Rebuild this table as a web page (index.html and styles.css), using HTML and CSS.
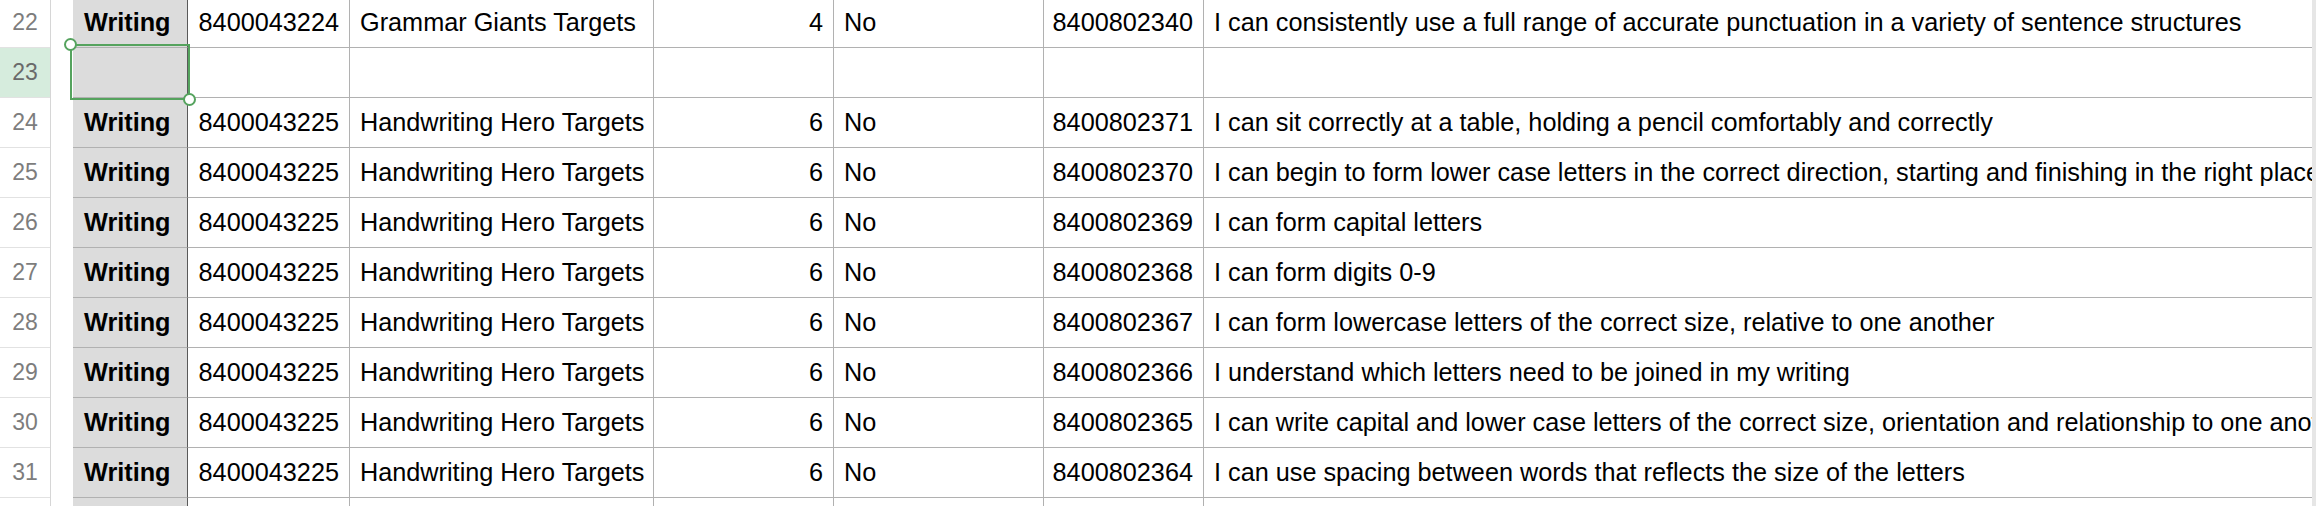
FILE: index.html
```html
<!DOCTYPE html>
<html lang="en">
<head>
<meta charset="utf-8">
<title>Sheet</title>
<link rel="stylesheet" href="styles.css">
</head>
<body>
<div class="sheet">
  <div class="rowheads">
    <div class="rh">22</div>
    <div class="rh rh-active">23</div>
    <div class="rh">24</div>
    <div class="rh">25</div>
    <div class="rh">26</div>
    <div class="rh">27</div>
    <div class="rh">28</div>
    <div class="rh">29</div>
    <div class="rh">30</div>
    <div class="rh">31</div>
    <div class="rh"></div>
  </div>
  <div class="gap"></div>
  <div class="table">
    <div class="row">
      <div class="c c-cat">Writing</div>
      <div class="c num">8400043224</div>
      <div class="c">Grammar Giants Targets</div>
      <div class="c num">4</div>
      <div class="c">No</div>
      <div class="c num">8400802340</div>
      <div class="c c-last">I can consistently use a full range of accurate punctuation in a variety of sentence structures</div>
    </div>
    <div class="row">
      <div class="c c-cat c-selected">
        <div class="sel"></div>
        <div class="handle handle-tl"></div>
        <div class="handle handle-br"></div>
      </div>
      <div class="c num"></div>
      <div class="c"></div>
      <div class="c num"></div>
      <div class="c"></div>
      <div class="c num"></div>
      <div class="c c-last"></div>
    </div>
    <div class="row">
      <div class="c c-cat">Writing</div>
      <div class="c num">8400043225</div>
      <div class="c">Handwriting Hero Targets</div>
      <div class="c num">6</div>
      <div class="c">No</div>
      <div class="c num">8400802371</div>
      <div class="c c-last">I can sit correctly at a table, holding a pencil comfortably and correctly</div>
    </div>
    <div class="row">
      <div class="c c-cat">Writing</div>
      <div class="c num">8400043225</div>
      <div class="c">Handwriting Hero Targets</div>
      <div class="c num">6</div>
      <div class="c">No</div>
      <div class="c num">8400802370</div>
      <div class="c c-last">I can begin to form lower case letters in the correct direction, starting and finishing in the right place</div>
    </div>
    <div class="row">
      <div class="c c-cat">Writing</div>
      <div class="c num">8400043225</div>
      <div class="c">Handwriting Hero Targets</div>
      <div class="c num">6</div>
      <div class="c">No</div>
      <div class="c num">8400802369</div>
      <div class="c c-last">I can form capital letters</div>
    </div>
    <div class="row">
      <div class="c c-cat">Writing</div>
      <div class="c num">8400043225</div>
      <div class="c">Handwriting Hero Targets</div>
      <div class="c num">6</div>
      <div class="c">No</div>
      <div class="c num">8400802368</div>
      <div class="c c-last">I can form digits 0-9</div>
    </div>
    <div class="row">
      <div class="c c-cat">Writing</div>
      <div class="c num">8400043225</div>
      <div class="c">Handwriting Hero Targets</div>
      <div class="c num">6</div>
      <div class="c">No</div>
      <div class="c num">8400802367</div>
      <div class="c c-last">I can form lowercase letters of the correct size, relative to one another</div>
    </div>
    <div class="row">
      <div class="c c-cat">Writing</div>
      <div class="c num">8400043225</div>
      <div class="c">Handwriting Hero Targets</div>
      <div class="c num">6</div>
      <div class="c">No</div>
      <div class="c num">8400802366</div>
      <div class="c c-last">I understand which letters need to be joined in my writing</div>
    </div>
    <div class="row">
      <div class="c c-cat">Writing</div>
      <div class="c num">8400043225</div>
      <div class="c">Handwriting Hero Targets</div>
      <div class="c num">6</div>
      <div class="c">No</div>
      <div class="c num">8400802365</div>
      <div class="c c-last">I can write capital and lower case letters of the correct size, orientation and relationship to one another</div>
    </div>
    <div class="row">
      <div class="c c-cat">Writing</div>
      <div class="c num">8400043225</div>
      <div class="c">Handwriting Hero Targets</div>
      <div class="c num">6</div>
      <div class="c">No</div>
      <div class="c num">8400802364</div>
      <div class="c c-last">I can use spacing between words that reflects the size of the letters</div>
    </div>
    <div class="row">
      <div class="c c-cat"></div>
      <div class="c num"></div>
      <div class="c"></div>
      <div class="c num"></div>
      <div class="c"></div>
      <div class="c num"></div>
      <div class="c c-last"></div>
    </div>
  </div>
  <div class="strip"></div>
</div>
</body>
</html>
```

FILE: styles.css
```css
html, body {
  margin: 0;
  padding: 0;
  height: 506px;
  overflow: hidden;
  background: #ffffff;
}

body {
  font-family: "Liberation Sans", Arial, Helvetica, sans-serif;
  color: #000000;
}

.sheet {
  display: flex;
  margin-top: -2px;
  width: 2316px;
}

.rowheads {
  width: 51px;
  flex: 0 0 51px;
  border-right: 1px solid #d6d6d6;
  box-sizing: border-box;
}

.rh {
  height: 50px;
  box-sizing: border-box;
  border-bottom: 1px solid #e2e2e2;
  display: flex;
  align-items: center;
  justify-content: center;
  font-size: 23px;
  color: #7d7d7d;
}

.rh-active {
  background: #d6ecdd;
  color: #6a6a6a;
}

.gap {
  flex: 0 0 22px;
}

.table {
  flex: 1 1 auto;
  min-width: 0;
}

.row {
  display: grid;
  grid-template-columns: 115px 162px 304px 180px 210px 160px 1fr;
  height: 50px;
}

.c {
  box-sizing: border-box;
  height: 50px;
  border-right: 1px solid #b1b1b1;
  border-bottom: 1px solid #b1b1b1;
  display: flex;
  align-items: center;
  padding: 0 10px;
  font-size: 25.25px;
  white-space: nowrap;
  overflow: hidden;
  min-width: 0;
}

.num {
  justify-content: flex-end;
}

.c-cat {
  background: #dcdcdc;
  font-weight: bold;
  padding-left: 11px;
  border-right: 1px solid #5a5a5a;
}

.c-last {
  border-right: none;
  padding-left: 10px;
}

.c-selected {
  position: relative;
  overflow: visible;
}

.sel {
  position: absolute;
  top: -4px;
  left: -3px;
  right: -3px;
  bottom: -3px;
  border: 2px solid #55a35e;
  z-index: 2;
}

.handle {
  position: absolute;
  width: 9px;
  height: 9px;
  border: 2px solid #55a35e;
  border-radius: 50%;
  background: #ffffff;
  z-index: 3;
}

.handle-tl {
  top: -10px;
  left: -9px;
}

.handle-br {
  bottom: -9px;
  right: -9px;
}

.strip {
  flex: 0 0 4px;
  background: #e6e6e6;
  height: 520px;
}
```
